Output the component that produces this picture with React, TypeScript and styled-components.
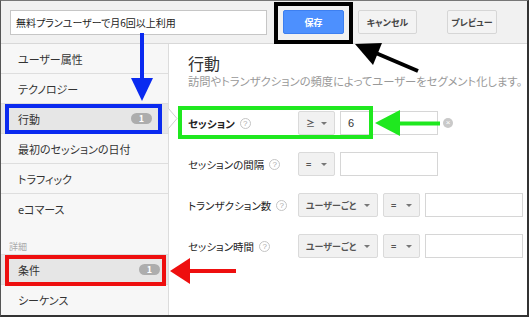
import React from 'react'
import styled, { createGlobalStyle } from 'styled-components'

const GlobalStyle = createGlobalStyle`
  html, body { margin: 0; padding: 0; background: #fff; }
  * { box-sizing: border-box; }
`

const Frame = styled.div`
  position: relative;
  width: 529px;
  height: 317px;
  overflow: hidden;
  display: flex;
  flex-direction: column;
  background: #fff;
  border-top: 1px solid #777;
  border-left: 1px solid #555;
  border-right: 2px solid #333;
  border-bottom: 2px solid #333;
  color: #333;
  font-family: "Noto Sans CJK JP", "Noto Sans", sans-serif;
  font-feature-settings: "palt";
`

const TopBar = styled.header`
  height: 43px;
  flex-shrink: 0;
  display: flex;
  align-items: center;
  padding-left: 9px;
  background: #f1f1f1;
  border-bottom: 1px solid #d8d8d8;
`

const NameInput = styled.div`
  width: 257px;
  height: 25px;
  display: flex;
  align-items: center;
  padding-left: 5px;
  background: #fff;
  border: 1px solid #c6c6c6;
  font-size: 10px;
  color: #222;
`

const Button = styled.div<{ $primary?: boolean; $w: number; $gap: number }>`
  position: relative;
  width: ${p => p.$w}px;
  height: 24px;
  margin-left: ${p => p.$gap}px;
  display: flex;
  align-items: center;
  justify-content: center;
  border-radius: 2px;
  font-size: 9px;
  font-weight: 700;
  color: ${p => (p.$primary ? '#fff' : '#444')};
  background: ${p => (p.$primary ? '#4d90fe' : '#f3f3f3')};
  border: 1px solid ${p => (p.$primary ? '#3d7ff0' : '#d6d6d6')};
`

const Mark = styled.span<{ $c: string; $l: number; $t: number; $w: number; $h: number }>`
  position: absolute;
  left: ${p => p.$l}px;
  top: ${p => p.$t}px;
  width: ${p => p.$w}px;
  height: ${p => p.$h}px;
  border: 4px solid ${p => p.$c};
  pointer-events: none;
  z-index: 5;
`

const Body = styled.div`
  flex: 1;
  display: flex;
  min-height: 0;
`

const Sidebar = styled.nav`
  width: 168px;
  flex-shrink: 0;
  background: #f7f7f7;
  border-right: 1px solid #dcdcdc;
`

const NavItem = styled.div<{ $active?: boolean; $top?: boolean; $last?: boolean }>`
  position: relative;
  height: ${p => (p.$top ? 31 : 30)}px;
  display: flex;
  align-items: center;
  padding-left: 17px;
  font-size: 11px;
  line-height: 14px;
  color: #333;
  background: ${p => (p.$active ? '#e6e6e6' : '#f7f7f7')};
  border-top: ${p => (p.$top ? '1px solid #dedede' : 'none')};
  border-bottom: ${p => (p.$last ? 'none' : '1px solid #dedede')};
`

const Badge = styled.span<{ $inset: number }>`
  margin-left: auto;
  margin-right: ${p => p.$inset}px;
  width: 21px;
  height: 11px;
  border-radius: 6px;
  background: #adadad;
  color: #fff;
  font-size: 9px;
  font-weight: 700;
  line-height: 11px;
  text-align: center;
`

const Notch = styled.svg`
  position: absolute;
  right: -10px;
  top: 4px;
  z-index: 2;
`

const SectionLabel = styled.div`
  height: 30px;
  padding: 17px 0 0 8px;
  font-size: 9px;
  line-height: 12px;
  color: #aaa;
`

const Panel = styled.main`
  flex: 1;
  padding: 9px 0 0 19px;
  background: #fff;
`

const Title = styled.h2`
  margin: 0 0 1px;
  font-size: 16px;
  line-height: 20px;
  font-weight: 400;
  color: #333;
`

const Subtitle = styled.p`
  margin: 0 0 23px;
  font-size: 11.3px;
  line-height: 14px;
  color: #999;
  white-space: nowrap;
`

const Row = styled.div`
  position: relative;
  display: flex;
  align-items: center;
  gap: 5px;
  height: 24px;
  & + & { margin-top: 17px; }
`

const FieldLabel = styled.div<{ $bold?: boolean }>`
  width: 105px;
  display: flex;
  align-items: center;
  gap: 5px;
  font-size: 10.5px;
  font-weight: ${p => (p.$bold ? 700 : 400)};
  color: #222;
  white-space: nowrap;
`

const Help = styled.span`
  width: 11px;
  height: 11px;
  border-radius: 50%;
  border: 1px solid #c4c4c4;
  display: flex;
  align-items: center;
  justify-content: center;
  font-family: "Liberation Sans", sans-serif;
  font-size: 8px;
  color: #aaa;
  font-weight: 400;
`

const Select = styled.div<{ $w: number }>`
  width: ${p => p.$w}px;
  height: 24px;
  display: flex;
  align-items: center;
  justify-content: space-between;
  padding: 0 7px;
  background: #f1f1f1;
  border: 1px solid #dadada;
  border-radius: 2px;
  font-size: 9px;
  font-weight: 700;
  color: #555;
`

const Caret = styled.span`
  width: 0;
  height: 0;
  border-left: 3px solid transparent;
  border-right: 3px solid transparent;
  border-top: 3px solid #777;
`

const TextBox = styled.div`
  width: 98px;
  height: 24px;
  display: flex;
  align-items: center;
  padding-left: 7px;
  background: #fff;
  border: 1px solid #d6d6d6;
  font-family: "Liberation Sans", sans-serif;
  font-size: 11px;
  color: #333;
`

const Clear = styled.span`
  width: 10px;
  height: 10px;
  border-radius: 50%;
  background: #c9c9c9;
  color: #fff;
  display: flex;
  align-items: center;
  justify-content: center;
  font-family: "Liberation Sans", sans-serif;
  font-size: 8px;
  line-height: 1;
`

const Overlay = styled.svg`
  position: absolute;
  left: -1px;
  top: -1px;
  pointer-events: none;
  z-index: 10;
`

const BLUE = '#0a2af0'
const GREEN = '#1fe81f'
const RED = '#ee0f0f'

const navTop = ['ユーザー属性', 'テクノロジー', '行動', '最初のセッションの日付', 'トラフィック', 'eコマース']

export default function App() {
  return (
    <Frame>
      <GlobalStyle />
      <TopBar>
        <NameInput>無料プランユーザーで月6回以上利用</NameInput>
        <Button $primary $w={61} $gap={16}>
          保存
          <Mark $c="#000" $l={-10} $t={-9} $w={79} $h={42} />
        </Button>
        <Button $w={59} $gap={14}>キャンセル</Button>
        <Button $w={50} $gap={30}>プレビュー</Button>
      </TopBar>
      <Body>
        <Sidebar>
          {navTop.map((label, i) => (
            <NavItem key={label} $active={label === '行動'} $last={i === navTop.length - 1}>
              {label}
              {label === '行動' && (
                <>
                  <Badge $inset={16}>1</Badge>
                  <Mark $c={BLUE} $l={4} $t={0} $w={157} $h={30} />
                  <Notch width="10" height="21" viewBox="0 0 10 21">
                    <path d="M0.5 0.5 L9 10.5 L0.5 20.5" fill="#fff" stroke="#cfcfcf" />
                  </Notch>
                </>
              )}
            </NavItem>
          ))}
          <SectionLabel>詳細</SectionLabel>
          <NavItem $active $top>
            条件
            <Badge $inset={8}>1</Badge>
            <Mark $c={RED} $l={4} $t={0} $w={161} $h={31} />
          </NavItem>
          <NavItem $last>シーケンス</NavItem>
        </Sidebar>
        <Panel>
          <Title>行動</Title>
          <Subtitle>訪問やトランザクションの頻度によってユーザーをセグメント化します。</Subtitle>
          <Row>
            <FieldLabel $bold>
              セッション<Help>?</Help>
            </FieldLabel>
            <Select $w={37}>≥<Caret /></Select>
            <TextBox>6</TextBox>
            <Clear>×</Clear>
            <Mark $c={GREEN} $l={-10} $t={-5} $w={195} $h={33} />
          </Row>
          <Row>
            <FieldLabel>
              セッションの間隔<Help>?</Help>
            </FieldLabel>
            <Select $w={37}>=<Caret /></Select>
            <TextBox />
          </Row>
          <Row>
            <FieldLabel>
              トランザクション数<Help>?</Help>
            </FieldLabel>
            <Select $w={80}>ユーザーごと<Caret /></Select>
            <Select $w={37}>=<Caret /></Select>
            <TextBox />
          </Row>
          <Row>
            <FieldLabel>
              セッション時間<Help>?</Help>
            </FieldLabel>
            <Select $w={80}>ユーザーごと<Caret /></Select>
            <Select $w={37}>=<Caret /></Select>
            <TextBox />
          </Row>
        </Panel>
      </Body>
      <Overlay width="529" height="317" viewBox="0 0 529 317">
        <line x1="418" y1="71" x2="377" y2="53.5" stroke="#000" strokeWidth="4" />
        <polygon points="355,44 382,43 373,65" fill="#000" />
        <line x1="142" y1="33" x2="142" y2="80" stroke={BLUE} strokeWidth="4" />
        <polygon points="131,78 153,78 142,101" fill={BLUE} />
        <line x1="440" y1="123.5" x2="398" y2="123.5" stroke={GREEN} strokeWidth="4" />
        <polygon points="375,123 400,110 400,136" fill={GREEN} />
        <line x1="236" y1="271" x2="188" y2="271" stroke={RED} strokeWidth="4" />
        <polygon points="170,271 190,258 190,284" fill={RED} />
      </Overlay>
    </Frame>
  )
}
